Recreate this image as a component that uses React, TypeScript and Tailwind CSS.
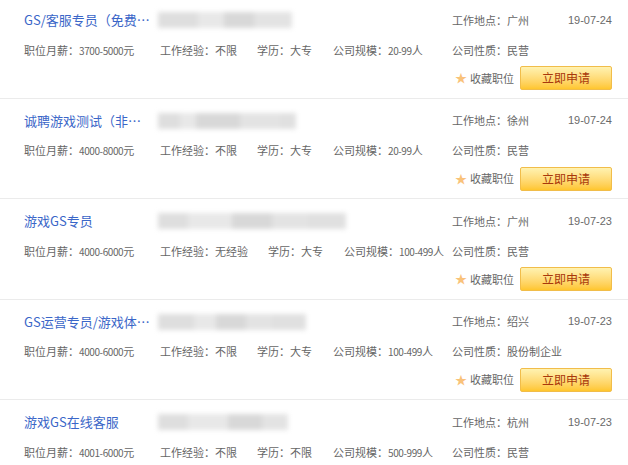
const jobs = [
  {
    title: "GS/客服专员（免费⋯",
    blur: [40, 26, 30, 38],
    place: "广州",
    date: "19-07-24",
    salary: "3700-5000",
    exp: "不限",
    edu: "大专",
    scale: "20-99",
    nature: "民营",
  },
  {
    title: "诚聘游戏测试（非⋯",
    blur: [22, 16, 44, 40, 16],
    place: "徐州",
    date: "19-07-24",
    salary: "4000-8000",
    exp: "不限",
    edu: "大专",
    scale: "20-99",
    nature: "民营",
  },
  {
    title: "游戏GS专员",
    blur: [30, 44, 40, 36, 38],
    place: "广州",
    date: "19-07-23",
    salary: "4000-6000",
    exp: "无经验",
    edu: "大专",
    scale: "100-499",
    nature: "民营",
  },
  {
    title: "GS运营专员/游戏体⋯",
    blur: [36, 22, 30, 26, 34],
    place: "绍兴",
    date: "19-07-23",
    salary: "4000-6000",
    exp: "不限",
    edu: "大专",
    scale: "100-499",
    nature: "股份制企业",
  },
  {
    title: "游戏GS在线客服",
    blur: [30, 40, 34, 26],
    place: "杭州",
    date: "19-07-23",
    salary: "4001-6000",
    exp: "不限",
    edu: "不限",
    scale: "500-999",
    nature: "民营",
  },
];

const shades = ["bg-[#dedede]", "bg-[#e8e8e8]", "bg-[#d8d8d8]", "bg-[#e3e3e3]", "bg-[#e0e0e0]"];

function BlurName({ parts }: { parts: number[] }) {
  return (
    <div className="flex h-[16px] blur-[2.5px]">
      {parts.map((w, i) => (
        <div key={i} className={`h-full ${shades[i % shades.length]}`} style={{ width: w }} />
      ))}
    </div>
  );
}

function Num({ children }: { children: string }) {
  return <span className="text-[10px] tracking-[-0.4px]">{children}</span>;
}

function JobRow({ job }: { job: (typeof jobs)[number] }) {
  return (
    <div className="h-[100.5px] border-b border-[#ebebeb] pl-[24px] pr-[16px] flex flex-col">
      <div className="h-[44px] flex items-center">
        <div className="w-[134px] text-[13px] text-[#3a66c8] whitespace-nowrap">{job.title}</div>
        <div className="w-[294px]">
          <BlurName parts={job.blur} />
        </div>
        <div className="flex-1 flex items-center justify-between">
          <span>工作地点：{job.place}</span>
          <span className="font-['Liberation_Sans',sans-serif] text-[11px] text-[#6a6a6a]">{job.date}</span>
        </div>
      </div>
      <div className="h-[16px] flex items-center">
        <div className="w-[428px] flex items-baseline whitespace-nowrap">
          <span className="w-[136px]">
            职位月薪：<Num>{job.salary}</Num>元
          </span>
          <span className="mr-[20px]">工作经验：{job.exp}</span>
          <span className="mr-[21px]">学历：{job.edu}</span>
          <span>
            公司规模：<Num>{job.scale}</Num>人
          </span>
        </div>
        <span>公司性质：{job.nature}</span>
      </div>
      <div className="mt-[8px] flex items-center justify-end">
        <span className="text-[#f9c27a] text-[12px] mr-[3px]">★</span>
        <span className="mr-[6px]">收藏职位</span>
        <button className="w-[92px] h-[24px] rounded-[2px] border border-[#f1bd4a] bg-gradient-to-b from-[#fff2b0] to-[#ffc62b] text-[#a8380c] text-[12px]">
          立即申请
        </button>
      </div>
    </div>
  );
}

export default function App() {
  return (
    <div className="w-[628px] h-[465px] overflow-hidden bg-white text-[11px] text-[#666] font-['Noto_Sans_CJK_SC',sans-serif]">
      <div className="-mt-[2px]">
        {jobs.map((job, i) => (
          <JobRow key={i} job={job} />
        ))}
      </div>
    </div>
  );
}
